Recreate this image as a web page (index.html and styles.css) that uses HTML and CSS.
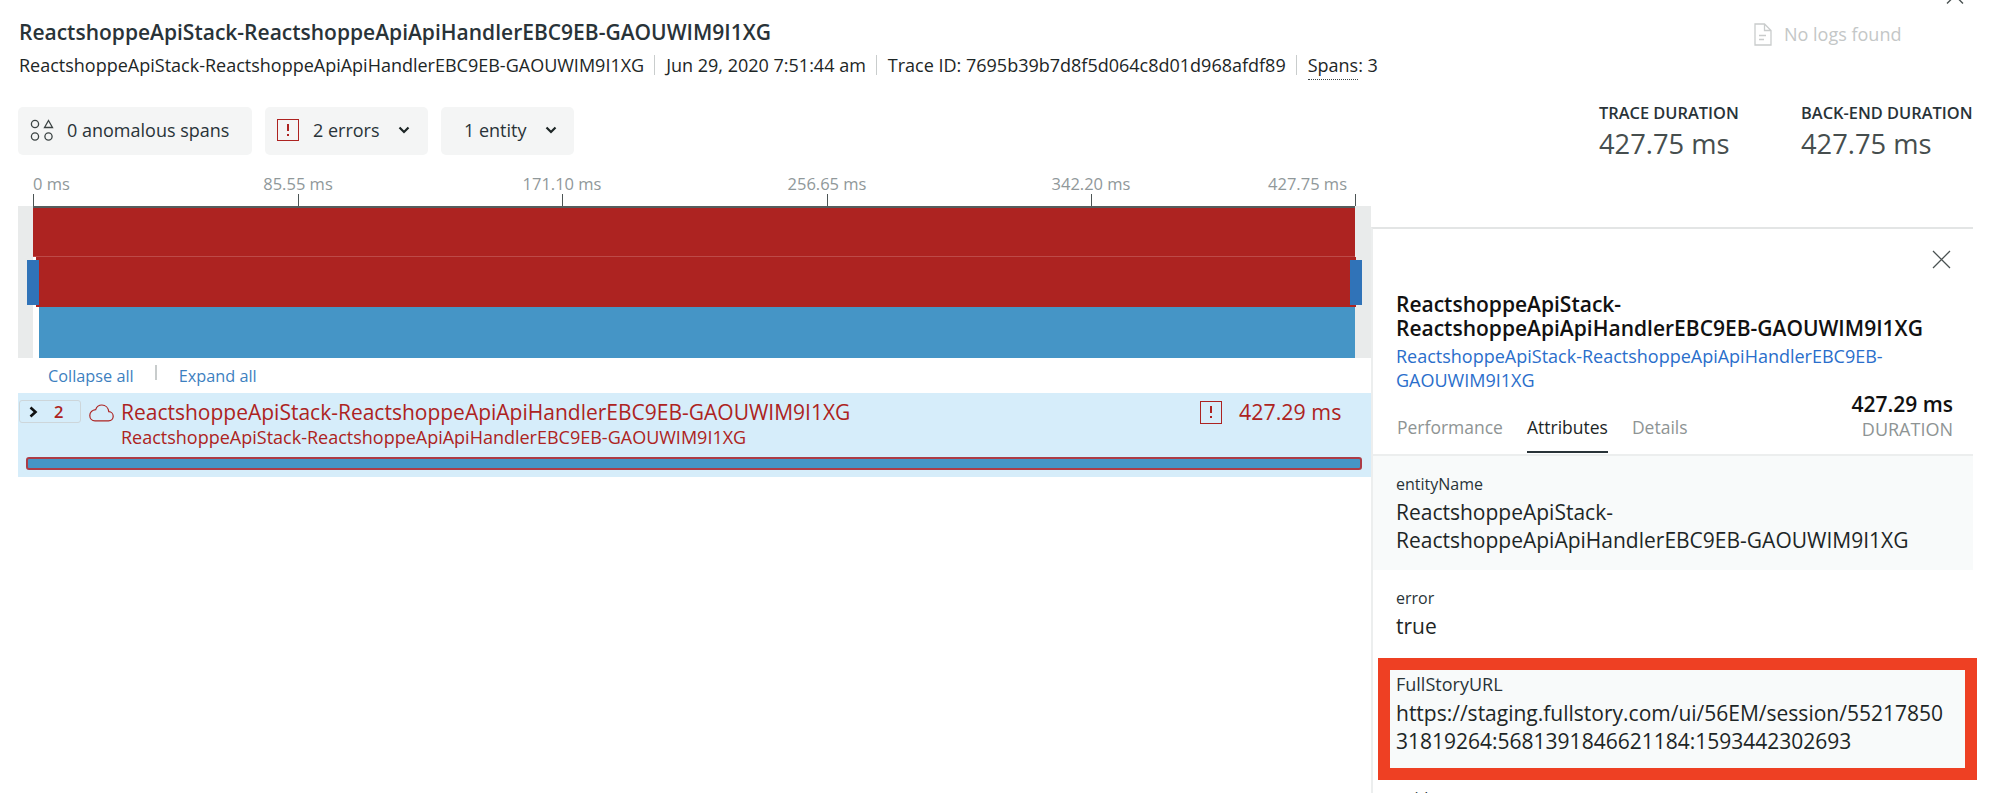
FILE: index.html
```html
<!DOCTYPE html>
<html lang="en">
<head>
<meta charset="utf-8">
<title>Trace</title>
<link rel="stylesheet" href="styles.css">
</head>
<body>
<div class="page">
  <main class="left">
    <h1 class="title">ReactshoppeApiStack-ReactshoppeApiApiHandlerEBC9EB-GAOUWIM9I1XG</h1>
    <div class="meta">
      <span>ReactshoppeApiStack-ReactshoppeApiApiHandlerEBC9EB-GAOUWIM9I1XG</span>
      <i class="sep"></i>
      <span>Jun 29, 2020 7:51:44 am</span>
      <i class="sep"></i>
      <span>Trace ID: 7695b39b7d8f5d064c8d01d968afdf89</span>
      <i class="sep"></i>
      <span class="dotted">Spans: 3</span>
    </div>
    <div class="pills">
      <div class="pill pill-a">
        <svg class="shapes" width="24" height="23" viewBox="0 0 24 23" fill="none" stroke="#3c4444" stroke-width="1.3">
          <circle cx="5" cy="5" r="3.6"/><path d="M18.5 1.5 L22.5 8.5 H14.5 Z"/><circle cx="5" cy="17.5" r="3.6"/><circle cx="18.5" cy="17.5" r="3.6"/>
        </svg>
        <span>0 anomalous spans</span>
      </div>
      <div class="pill pill-b">
        <span class="err"><b></b><b class="dot"></b></span>
        <span>2 errors</span>
        <svg class="chev" width="12" height="8" viewBox="0 0 12 8" fill="none" stroke="#1d2626" stroke-width="2.2"><path d="M1.5 1.5 L6 6 L10.5 1.5"/></svg>
      </div>
      <div class="pill pill-c">
        <span>1 entity</span>
        <svg class="chev" width="12" height="8" viewBox="0 0 12 8" fill="none" stroke="#1d2626" stroke-width="2.2"><path d="M1.5 1.5 L6 6 L10.5 1.5"/></svg>
      </div>
    </div>
    <div class="axis">
      <span class="tick t0"><em>0 ms</em></span>
      <span class="tick t1"><em>85.55 ms</em></span>
      <span class="tick t2"><em>171.10 ms</em></span>
      <span class="tick t3"><em>256.65 ms</em></span>
      <span class="tick t4"><em>342.20 ms</em></span>
      <span class="tick t5"><em>427.75 ms</em></span>
    </div>
    <div class="timeline">
      <div class="window">
        <div class="bar bar-red bar-1"></div>
        <div class="bar bar-red bar-2"></div>
        <div class="bar bar-blue"></div>
      </div>
      <i class="handle handle-l"></i>
      <i class="handle handle-r"></i>
    </div>
    <div class="collapse">
      <a>Collapse all</a><i class="sep2"></i><a>Expand all</a>
    </div>
    <div class="span">
      <div class="span-top">
        <div class="badge">
          <svg width="9" height="12" viewBox="0 0 9 12" fill="none" stroke="#111" stroke-width="2.6"><path d="M1.5 1.5 L6.5 6 L1.5 10.5"/></svg>
          <span>2</span>
        </div>
        <svg class="cloud" width="25" height="18" viewBox="0 0 25 18" fill="none" stroke="#ad2321" stroke-width="1.2"><path d="M6 16.8 H19.5 C22.3 16.8 24.2 14.8 24.2 12.3 C24.2 9.8 22.3 7.8 19.8 7.7 C19.3 3.8 16.4 1 12.9 1 C10 1 7.6 2.9 6.7 5.6 C3.4 6 .8 8.4 .8 11.4 C.8 14.5 3.1 16.8 6 16.8 Z"/></svg>
        <div class="span-names">
          <div class="span-name">ReactshoppeApiStack-ReactshoppeApiApiHandlerEBC9EB-GAOUWIM9I1XG</div>
          <div class="span-sub">ReactshoppeApiStack-ReactshoppeApiApiHandlerEBC9EB-GAOUWIM9I1XG</div>
        </div>
        <span class="err err-lg"><b></b><b class="dot"></b></span>
        <span class="span-time">427.29 ms</span>
      </div>
      <div class="progress"></div>
    </div>
  </main>
  <aside class="right">
    <svg class="top-close" width="18" height="4" viewBox="0 0 18 4" fill="none" stroke="#4a5252" stroke-width="1.4"><path d="M1 3.5 L9 -4.5 L17 3.5"/></svg>
    <div class="logs">
      <svg width="18" height="23" viewBox="0 0 18 23" fill="none" stroke="#c9cccc" stroke-width="1.3"><path d="M1 1 H10.5 L17 7.5 V22 H1 Z M10.5 1 V7.5 H17 M5 12.5 H12 M5 16.5 H10"/></svg>
      <span>No logs found</span>
    </div>
    <div class="stats">
      <div class="stat stat-a"><div class="stat-k">TRACE DURATION</div><div class="stat-v">427.75 ms</div></div>
      <div class="stat"><div class="stat-k">BACK-END DURATION</div><div class="stat-v">427.75 ms</div></div>
    </div>
    <section class="panel">
      <div class="panel-close">
        <svg width="19" height="19" viewBox="0 0 19 19" fill="none" stroke="#4a5252" stroke-width="1.3"><path d="M1 1 L18 18 M18 1 L1 18"/></svg>
      </div>
      <div class="panel-head">
        <h2 class="panel-title">ReactshoppeApiStack-<br>ReactshoppeApiApiHandlerEBC9EB-GAOUWIM9I1XG</h2>
        <a class="panel-link">ReactshoppeApiStack-ReactshoppeApiApiHandlerEBC9EB-<br>GAOUWIM9I1XG</a>
      </div>
      <div class="tabs">
        <span class="tab">Performance</span>
        <span class="tab tab-on">Attributes</span>
        <span class="tab">Details</span>
        <div class="duration">
          <div class="dur-v">427.29 ms</div>
          <div class="dur-k">DURATION</div>
        </div>
      </div>
      <div class="attr attr-shade attr-1">
        <div class="attr-k">entityName</div>
        <div class="attr-v">ReactshoppeApiStack-<br>ReactshoppeApiApiHandlerEBC9EB-GAOUWIM9I1XG</div>
      </div>
      <div class="attr attr-2">
        <div class="attr-k">error</div>
        <div class="attr-v">true</div>
      </div>
      <div class="attr attr-shade attr-3">
        <div class="attr-k attr-k-lg">FullStoryURL</div>
        <div class="attr-v">https://staging.fullstory.com/ui/56EM/session/55217850<br>31819264:5681391846621184:1593442302693</div>
        <i class="mark"></i>
      </div>
      <div class="attr attr-4">
        <div class="attr-k">guid</div>
      </div>
    </section>
  </aside>
</div>
</body>
</html>
```
FILE: styles.css
```css
* { box-sizing: border-box; }
html, body { margin: 0; padding: 0; background: #fff; }
body { font-family: "Open Sans", sans-serif; color: #1d2626; overflow: hidden; }
.page { display: flex; width: 1999px; height: 793px; overflow: hidden; }

.left { width: 1371px; flex: none; }
.title { margin: 0; padding: 20px 0 0 19px; font-size: 21px; line-height: 24px; font-weight: 600; color: #293338; white-space: nowrap; }
.meta { display: flex; align-items: center; margin-top: 9px; padding-left: 19px; font-size: 18px; line-height: 24px; height: 24px; color: #1d2626; white-space: nowrap; }
.sep { flex: none; width: 1px; height: 20px; background: #c9cdcd; margin: 0 11px 0 10px; }
.dotted { position: relative; }
.dotted::after { content: ""; position: absolute; left: 0; right: 20px; bottom: -3px; border-bottom: 1px dotted #3b4444; }

.pills { display: flex; margin: 30px 0 0 18px; gap: 13px; }
.pill { display: flex; align-items: center; height: 48px; padding-bottom: 2px; background: #f4f5f5; border-radius: 5px; font-size: 18px; color: #293338; white-space: nowrap; }
.pill-a { width: 234px; padding-left: 12px; gap: 13px; }
.pill-b { width: 163px; padding-left: 12px; }
.pill-b .chev { margin-left: 18px; }
.pill-c { width: 133px; padding-left: 23px; }
.pill-c .chev { margin-left: 18px; }
.err { position: relative; display: block; flex: none; width: 22px; height: 22px; border: 1.5px solid #ad2321; margin-right: 14px; }
.err b { position: absolute; left: 9px; top: 4px; width: 1.5px; height: 7px; background: #ad2321; }
.err b.dot { top: 14px; height: 2px; }

.axis { position: relative; height: 39px; margin-top: 12px; }
.tick { position: absolute; bottom: 0; width: 1px; height: 12px; background: #4d5555; }
.tick em { position: absolute; bottom: 13px; font-style: normal; font-size: 16.5px; line-height: 18px; color: #90989a; white-space: nowrap; transform: translateX(-50%); }
.t0 { left: 33px; } .t0 em { transform: none; }
.t1 { left: 298px; }
.t2 { left: 562px; }
.t3 { left: 827px; }
.t4 { left: 1091px; }
.t5 { left: 1355px; } .t5 em { transform: translateX(-100%); left: -8px; }

.timeline { position: relative; margin-left: 18px; height: 152px; background: #e9ebeb; padding: 0 16px 0 15px; border-top: 2px solid transparent; }
.window { background: #fff; height: 150px; display: flex; flex-direction: column; }
.timeline::before { content: ""; position: absolute; left: 15px; right: 16px; top: -2px; height: 2px; background: #555d5d; }
.bar { flex: none; }
.bar-red { background: #ad2321; }
.bar-1 { height: 49px; border-bottom: 1px solid #bd4a48; }
.bar-2 { height: 50px; margin-left: 3px; margin-right: -1px; }
.bar-blue { height: 51px; margin-left: 6px; background: #4595c6; }
.handle { position: absolute; top: 52px; width: 12px; height: 45px; background: #3073b8; }
.handle-l { left: 9px; }
.handle-r { left: 1332px; }

.collapse { display: flex; align-items: center; height: 35px; padding-left: 48px; font-size: 16.3px; color: #3d7fbf; }
.sep2 { width: 2px; height: 15px; background: #c8cccc; margin: -6px 22px 0 21px; }

.span { margin-left: 18px; height: 84px; background: #d6edfa; color: #ad2321; padding-top: 7px; }
.span-top { display: flex; align-items: flex-start; height: 50px; }
.badge { display: flex; align-items: center; width: 62px; height: 23px; margin-left: 1px; padding-left: 9px; border: 1px solid #cdd6da; border-radius: 3px; font-size: 16.5px; font-weight: 600; }
.badge span { margin-left: 16px; }
.cloud { margin: 4px 0 0 8px; flex: none; }
.span-names { margin-left: 7px; width: 1079px; flex: none; white-space: nowrap; }
.span-name { font-size: 21px; line-height: 24px; }
.span-sub { font-size: 18px; line-height: 22px; margin-top: 2px; }
.err-lg { margin: 1px 0 0 0; width: 22px; height: 23px; }
.span-time { margin-left: 17px; font-size: 21.4px; line-height: 24px; white-space: nowrap; }
.progress { height: 13px; margin: 7px 9px 0 8px; border: 2px solid #ad3c46; border-radius: 3px; background: #4595c6; }

.right { width: 602px; flex: none; position: relative; }
.top-close { position: absolute; left: 575px; top: 0; }
.logs { display: flex; align-items: center; gap: 12px; padding: 22px 0 0 383px; height: 46px; font-size: 18px; color: #c4c7c7; white-space: nowrap; }
.stats { display: flex; padding: 57px 0 0 228px; white-space: nowrap; }
.stat { flex: none; }
.stat-a { width: 202px; }
.stat-k { font-size: 16.4px; line-height: 20px; font-weight: 600; color: #293338; }
.stat-v { font-size: 27.3px; line-height: 36px; margin-top: 3px; color: #464e4e; }

.panel { margin-top: 65px; height: 600px; border-top: 2px solid #e3e5e5; border-left: 2px solid #eceeee; }
.panel-close { display: flex; justify-content: flex-end; padding: 21px 22px 0 0; height: 40px; }
.panel-head { padding: 23px 0 0 23px; }
.panel-title { margin: 0; font-size: 21px; line-height: 24px; font-weight: 600; color: #111; white-space: nowrap; }
.panel-link { display: block; margin-top: 4px; font-size: 18px; line-height: 24px; color: #2a6ecb; white-space: nowrap; }
.tabs { position: relative; display: flex; gap: 24px; height: 64px; padding: 23px 0 0 24px; border-bottom: 2px solid #eceeee; font-size: 17.5px; line-height: 24px; color: #8e9494; }
.tab-on { color: #1d2626; }
.tab-on::after { content: ""; display: block; height: 2px; background: #293338; margin-top: 12px; }
.duration { position: absolute; right: 20px; top: 0; text-align: right; white-space: nowrap; }
.dur-v { font-size: 21px; line-height: 24px; font-weight: 600; color: #111; }
.dur-k { font-size: 18px; line-height: 24px; margin-top: 1px; color: #8e9494; }

.attr { position: relative; padding: 0 0 0 23px; white-space: nowrap; }
.attr-shade { background: #f8fafa; }
.attr-k { font-size: 16px; line-height: 22px; color: #293338; }
.attr-k-lg { font-size: 18px; }
.attr-v { font-size: 21px; line-height: 28px; margin-top: 3px; color: #1d2626; }
.attr-1 { height: 114px; padding-top: 17px; }
.attr-2 { height: 100px; padding-top: 17px; background: #fff; }
.attr-3 { height: 99px; margin-left: 17px; width: 576px; padding: 3px 0 0 6px; }
.attr-3 .attr-v { margin-top: 4px; }
.mark { position: absolute; left: -12px; top: -12px; width: 599px; height: 122px; border: 12px solid #ee4023; }
.attr-4 { padding-top: 18px; }
```
